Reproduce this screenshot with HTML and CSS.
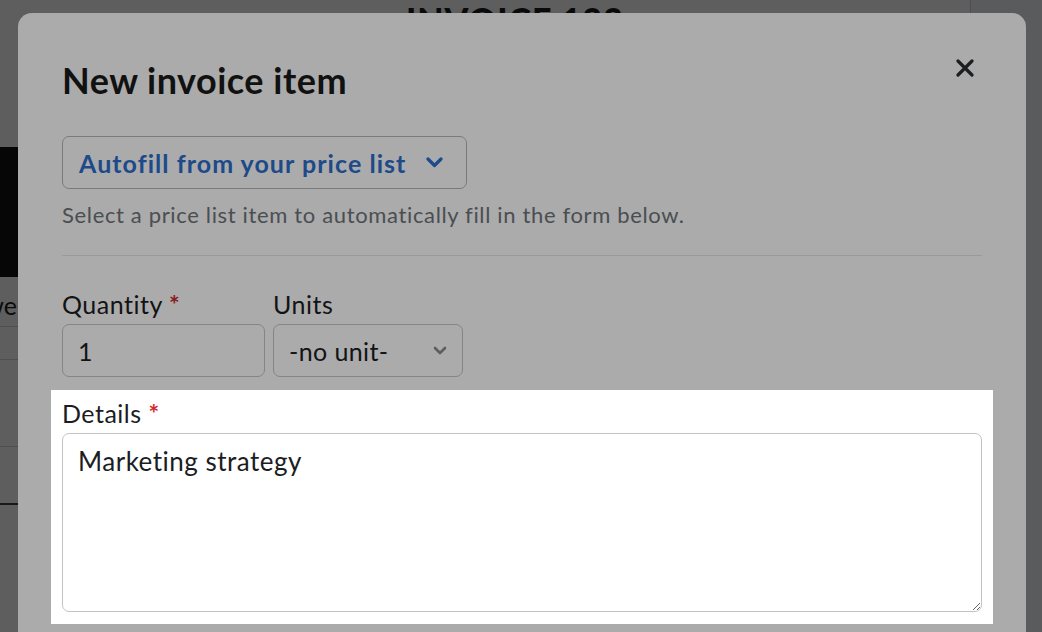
FILE: index.html
```html
<!DOCTYPE html>
<html lang="en">
<head>
    <meta charset="UTF-8">
    <meta name="viewport" content="width=device-width, initial-scale=1.0">
    <title>Invoice 123 - New item</title>
    <link rel="stylesheet" href="styles.css">
</head>
<body>
    <div class="page">
        <div class="page-left">
            <div class="side-block"></div>
            <div class="side-text"><span>we</span></div>
            <div class="side-row"></div>
            <div class="side-row tall"></div>
            <div class="side-row last"></div>
        </div>
        <div class="page-main">
            <h1 class="page-title">INVOICE 123</h1>
        </div>
        <div class="page-right"></div>
    </div>

    <div class="backdrop"></div>

    <div class="modal">
        <div class="modal-head">
            <h2>New invoice item</h2>
            <button class="close-btn" aria-label="Close">
                <svg width="18" height="18" viewBox="0 0 18 18">
                    <path d="M2 2 L16 16 M16 2 L2 16" stroke="#2a2e32" stroke-width="3.2" stroke-linecap="round"/>
                </svg>
            </button>
        </div>

        <button class="autofill-btn">
            Autofill from your price list
            <svg width="17" height="11" viewBox="0 0 17 11">
                <path d="M2 2 L8.5 8.5 L15 2" fill="none" stroke="#2d6fce" stroke-width="3.2" stroke-linecap="round" stroke-linejoin="round"/>
            </svg>
        </button>
        <p class="hint">Select a price list item to automatically fill in the form below.</p>

        <hr class="divider">

        <div class="form-row">
            <div class="field qty-field">
                <label for="qty">Quantity <span class="req">*</span></label>
                <input type="text" id="qty" value="1">
            </div>
            <div class="field unit-field">
                <label for="unit">Units</label>
                <div class="select-box">
                    <span>-no unit-</span>
                    <svg width="14" height="9" viewBox="0 0 14 9">
                        <path d="M2 2 L7 7 L12 2" fill="none" stroke="#888c90" stroke-width="2.6" stroke-linecap="round" stroke-linejoin="round"/>
                    </svg>
                </div>
            </div>
        </div>

        <div class="field details-field spotlight">
            <label for="details">Details <span class="req">*</span></label>
            <textarea id="details">Marketing strategy</textarea>
        </div>
    </div>
</body>
</html>
```

FILE: styles.css
```css
body {
    font-family: Lato, "Noto Sans", sans-serif;
    margin: 0;
    padding: 0;
    background-color: #fff;
    height: 632px;
    overflow: hidden;
    color: #1b1d1f;
}

/* page behind the modal */
.page {
    display: flex;
    height: 632px;
}

.page-left {
    width: 18px;
    padding-top: 147px;
    overflow: hidden;
}

.side-block {
    height: 130px;
    background-color: #111;
}

.side-text {
    display: flex;
    justify-content: flex-end;
    height: 49px;
    line-height: 56px;
    font-size: 25px;
    padding-right: 1px;
    border-bottom: 1px solid #d3d6d9;
    white-space: nowrap;
}

.side-row {
    height: 32px;
    border-bottom: 1px solid #d3d6d9;
}

.side-row.tall {
    height: 86px;
}

.side-row.last {
    height: 56px;
    border-bottom: 2px solid #444;
}

.page-main {
    flex: 1;
    border-right: 1px solid #ced4d7;
}

.page-title {
    margin: 0;
    padding-top: 3px;
    padding-left: 388px;
    font-size: 34px;
    line-height: 1;
    font-weight: 900;
    letter-spacing: 1px;
}

.page-right {
    width: 71px;
    background-color: #f1f6fd;
}

.backdrop {
    position: fixed;
    inset: 0;
    background-color: rgba(0, 0, 0, 0.45);
}

/* modal */
.modal {
    position: fixed;
    top: 13px;
    left: 18px;
    width: 1008px;
    height: 700px;
    box-sizing: border-box;
    padding: 45px 44px 0;
    background-color: #fff;
    border-radius: 14px;
    z-index: 10;
}

.modal-head {
    display: flex;
    justify-content: space-between;
    align-items: flex-start;
}

.modal-head h2 {
    margin: 0;
    font-size: 36px;
    line-height: 44px;
    font-weight: 700;
    letter-spacing: 0.5px;
    color: #1a1a1a;
}

.close-btn {
    margin: 1px 8px 0 0;
    padding: 0;
    border: none;
    background: none;
    width: 18px;
    height: 18px;
    display: flex;
}

.autofill-btn {
    margin-top: 34px;
    height: 53px;
    display: flex;
    align-items: center;
    gap: 20px;
    padding: 0 23px 0 16px;
    background-color: #fff;
    border: 1px solid #b5b7b9;
    border-radius: 7px;
    font-family: inherit;
    font-size: 25px;
    font-weight: 700;
    letter-spacing: 1.05px;
    color: #2d6fce;
}

.hint {
    margin: 12px 0 0;
    font-size: 22px;
    line-height: 28px;
    letter-spacing: 0.65px;
    color: #6f757b;
}

.divider {
    margin: 26px 0 33px;
    border: none;
    border-top: 1px solid #e3e4e5;
}

.form-row {
    display: flex;
    gap: 8px;
}

.field label {
    display: block;
    font-size: 25px;
    line-height: 30px;
    letter-spacing: 0.5px;
    margin-bottom: 5px;
    color: #1b1d1f;
}

.req {
    color: #d02a2a;
    font-weight: 700;
}

.qty-field input,
.select-box {
    box-sizing: border-box;
    height: 53px;
    border: 1px solid #c3c6c9;
    border-radius: 7px;
    font-family: inherit;
    font-size: 25px;
    letter-spacing: 0.4px;
    color: #1b1d1f;
    background-color: #fff;
}

.qty-field input {
    width: 203px;
    padding: 0 15px;
}

.select-box {
    width: 190px;
    display: flex;
    align-items: center;
    justify-content: space-between;
    padding: 0 15px 0 15px;
}

/* highlighted field of the tour */
.spotlight {
    position: relative;
    z-index: 1;
    margin: 13px -11px 0;
    padding: 8px 11px 12px;
    background-color: #fff;
    box-shadow: 0 0 0 2000px rgba(0, 0, 0, 0.33);
}

.details-field textarea {
    display: block;
    box-sizing: border-box;
    width: 100%;
    height: 179px;
    padding: 11px 15px;
    border: 1px solid #c0c4c8;
    border-radius: 7px;
    font-family: inherit;
    font-size: 26px;
    line-height: 32px;
    letter-spacing: 0.5px;
    color: #1b1d1f;
    resize: vertical;
}
```
